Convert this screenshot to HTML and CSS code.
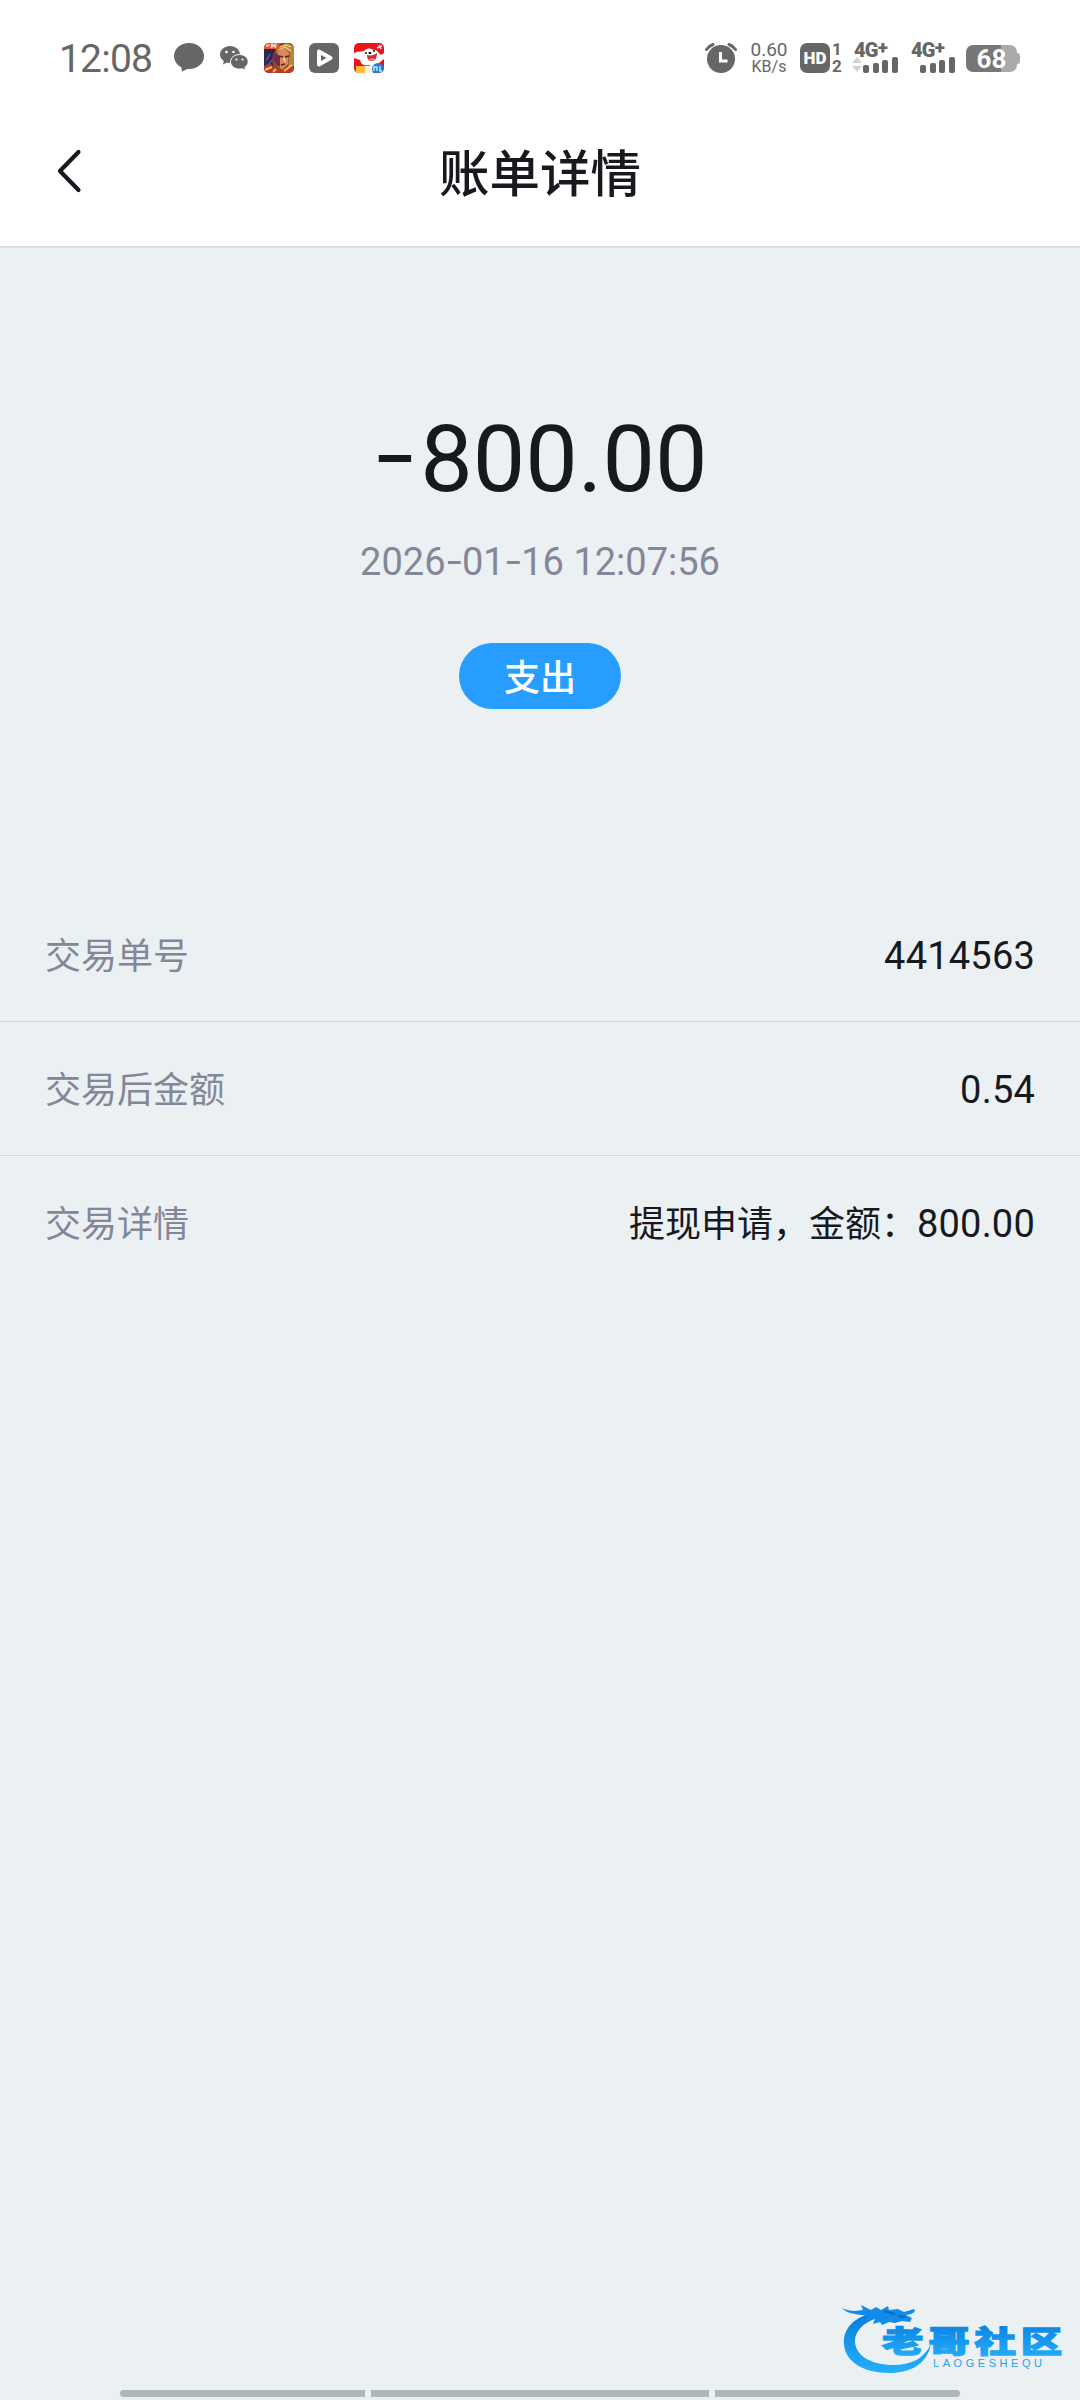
FILE: index.html
```html
<!DOCTYPE html>
<html lang="zh-CN">
<head>
    <meta charset="UTF-8">
    <meta name="viewport" content="width=device-width, initial-scale=1.0">
    <title>账单详情</title>
    <link rel="stylesheet" href="styles.css">
</head>
<body>
    <div class="page">
        <header class="header">
            <div class="status-bar">
                <span class="time">12:08</span>
                <div class="status-left">
                    <svg width="30" height="30" viewBox="0 0 30 30"><path d="M15 0C6.500 0 0 5.800 0 13c0 4.600 2.800 8.900 7.300 11.300L8 28.500l5.300-2.600C22.500 26.800 30 21 30 13 30 5.800 23.500 0 15 0z" fill="#666"/></svg>
                    <svg width="30" height="30" viewBox="0 0 30 30">
                        <path d="M11 3C5.500 3 1 6.800 1 11.500c0 2.700 1.500 5 3.800 6.600L4 21.500l3.800-2c1 .3 2.100.5 3.200.5 5.500 0 10-3.800 10-8.500S16.500 3 11 3z" fill="#666"/>
                        <path d="M20.500 11.500c-5 0-9 3.200-9 7.300s4 7.300 9 7.300c1 0 2-.1 2.900-.4l3.300 1.600-.8-2.900c2-1.400 3.300-3.400 3.300-5.600 0-4.100-3.900-7.300-8.700-7.300z" fill="#666" stroke="#fff"/>
                        <g fill="#fff"><circle cx="7.500" cy="9" r="1.300"/><circle cx="14.500" cy="9" r="1.300"/><circle cx="17.500" cy="16.500" r="1.100"/><circle cx="23.500" cy="16.500" r="1.100"/></g>
                    </svg>
                    <!-- game -->
                    <svg width="30" height="30" viewBox="0 0 30 30">
                        <defs><clipPath id="clip1"><rect width="30" height="30" rx="5"/></clipPath></defs>
                        <g clip-path="url(#clip1)">
                            <rect width="30" height="30" fill="#94452c"/>
                            <path d="M0 5h12L8 16l2 14H0z" fill="#33264c"/>
                            <path d="M14 4l9-4 7 3v20l-6 2 2-15-7-5-8 6z" fill="#b98440"/>
                            <path d="M12 10l8-5 5 5-1 11-6 6-5-5-3-6z" fill="#d98a5c"/>
                            <path d="M12 9l4 5v10l-3-2-4-6z" fill="#6b2c4c"/>
                            <path d="M15 13l4 1M21 14l4-1M17 22l4-1" stroke="#5c241c" stroke-width="1.500"/>
                            <path d="M16 4l6-2 5 2M15 7l6-3 6 4" stroke="#f0ce83" stroke-width="1.200" fill="none"/>
                            <path d="M20 15l1 4" stroke="#ffd39c" stroke-width="1.500"/>
                            <path d="M0 23l6-3 6 7 6 1 12-5v7H0z" fill="#b83a27"/>
                            <path d="M1 27l7-3M20 28l8-6M9 29l3-3" stroke="#f5b95d" stroke-width="2"/>
                            <path d="M2 18l4-7M4 22l4-5" stroke="#565ba4" stroke-width="1.500"/>
                            <path d="M0 0h16l-2 6H0z" fill="#e25931"/>
                            <path d="M3 4V2h3M7 5l1-4 2 2-2 1M13 1h-2l-1 2h2l-1 2" stroke="#ffe6cf" stroke-width="1.200" fill="none"/>
                        </g>
                    </svg>
                    <svg width="30" height="30" viewBox="0 0 30 30"><rect width="30" height="30" rx="6" fill="#666"/><path d="M10 8.500v13l11.500-6.500z" fill="#666" stroke="#fff" stroke-width="4" stroke-linejoin="round"/></svg>
                    <!-- travel -->
                    <svg width="30" height="30" viewBox="0 0 30 30">
                        <defs><clipPath id="clip2"><rect width="30" height="30" rx="5"/></clipPath></defs>
                        <g clip-path="url(#clip2)">
                            <rect width="30" height="30" fill="#e8151f"/>
                            <path d="M0 10c4-2 7-1 10-2 3-3 6-3 9-1 4-1 5 3 8 5l3-2v6l-4 3c-2 4-7 5-12 3-5 1-7-1-8-5L0 15z" fill="#fff"/>
                            <path d="M13 12c4 1 7 0 10-2 0 5-2 8-5 8s-5-2-5-6z" fill="#d82935"/>
                            <path d="M15 16c2-1 4-1 6 0l-3 2z" fill="#ff8f99"/>
                            <circle cx="12" cy="10" r=".9"/><circle cx="20" cy="8" r=".9"/><ellipse cx="16" cy="10" rx="1.600" ry="1"/>
                            <path d="M23 5l5-2M25 2l2 4" stroke="#fff" stroke-width="1.500"/>
                            <path d="M2 23h9v7H2z" fill="#ffbd35"/>
                            <path d="M11 23h8v7h-8z" fill="#fff1e4"/>
                            <circle cx="24" cy="26" r="6" fill="#227bd6"/>
                            <path d="M20 28v-4h3v4M26 23v5h2" stroke="#d9f1ff" stroke-width="1.300" fill="none"/>
                        </g>
                    </svg>
                </div>
                <div class="status-right">
                    <svg width="32" height="30" viewBox="0 0 32 30"><circle cx="16" cy="16" r="14" fill="#666"/><path d="M1.500 6.500Q4 3 8 1.500M30.500 6.500Q28 3 24 1.500" stroke="#666" stroke-width="3" fill="none" stroke-linecap="round"/><path d="M15.500 9v9h7" stroke="#fff" stroke-width="3" fill="none"/></svg>
                    <div class="speed"><span>0.60</span><span class="unit">KB/s</span></div>
                    <div class="hd"><span class="hd-box">HD</span><span class="sim"><b>1</b><b>2</b></span></div>
                    <div class="signal">
                        <span class="net">4G<sup>+</sup></span>
                        <svg width="47" height="17" viewBox="0 0 47 17"><path d="M0 7l5-6 5 6zM0 10h10l-5 6z" fill="#d2d2d2"/><g fill="#666"><rect x="11" y="9" width="6" height="8" rx="2"/><rect x="21" y="7" width="6" height="10" rx="2"/><rect x="30" y="4" width="6" height="13" rx="2"/><rect x="40" y="1" width="6" height="16" rx="2"/></g></svg>
                    </div>
                    <div class="signal signal-2">
                        <span class="net">4G<sup>+</sup></span>
                        <svg width="47" height="17" viewBox="0 0 47 17"><g fill="#666"><rect x="11" y="9" width="6" height="8" rx="2"/><rect x="21" y="7" width="6" height="10" rx="2"/><rect x="30" y="4" width="6" height="13" rx="2"/><rect x="40" y="1" width="6" height="16" rx="2"/></g></svg>
                    </div>
                    <div class="battery"><span class="level">68</span></div>
                </div>
            </div>
            <div class="nav">
                <svg class="back" width="26" height="44" viewBox="0 0 26 44"><path d="M22.500 3L4 22l18.500 19" fill="none" stroke="#17191f" stroke-width="4.200" stroke-linecap="round" stroke-linejoin="round"/></svg>
                <h1>账单详情</h1>
            </div>
        </header>

        <main>
            <section class="summary">
                <div class="amount"><span class="minus">-</span>800.00</div>
                <div class="date">2026<span class="dash">-</span>01<span class="dash">-</span>16 12:07:56</div>
                <div class="tag">支出</div>
            </section>
            <ul class="details">
                <li><span class="label">交易单号</span><span class="value"><span class="num">4414563</span></span></li>
                <li><span class="label">交易后金额</span><span class="value"><span class="num">0.54</span></span></li>
                <li><span class="label">交易详情</span><span class="value">提现申请，金额：<span class="num">800.00</span></span></li>
            </ul>
        </main>

        <svg class="watermark" width="230" height="76" viewBox="0 0 230 76">
            <defs>
                <linearGradient id="blue" x1="0" y1="0" x2="0" y2="1"><stop offset="0" stop-color="#087bdd"/><stop offset="1" stop-color="#24b0fb"/></linearGradient>
            </defs>
            <path d="M31 11C12 16 2 27 3 42c1 18 20 29 45 29 22 0 38-9 42-29-7 15-20 21-38 21C31 63 14 54 14 39c0-10 8-18 22-23z" fill="url(#blue)"/>
            <path d="M1 6c9 4 15 3 21 2l-2-5 10 5 5-3 5 3 7-4 1 4 9-1 6 3 10-3c2 2 0 4-3 5l-5 1 6 3-2 4-8-1-7 2-6-1-7 3-2-3-7 2 2-6-9 3 1-5C16 12 6 12 1 6z" fill="#138bea"/>
            <path d="M43 9l11 3M57 14l8 1" stroke="#076bc4" stroke-width="2"/>
            <g transform="translate(41 50) scale(1.12 .8)"><text class="brand" x="0" y="0">老哥社区</text></g>
            <text class="brand-en" x="92" y="65" textLength="109">LAOGESHEQU</text>
        </svg>

        <div class="gesture-bar"><i class="side"></i><i class="mid"></i><i class="side"></i></div>
    </div>
</body>
</html>
```

FILE: styles.css
```css
* {
    box-sizing: border-box;
}
body {
    margin: 0;
    font-family: Roboto, "Noto Sans CJK SC", sans-serif;
    color: #17191f;
    background-color: #ebf0f3;
}
.page {
    position: relative;
    display: flex;
    flex-direction: column;
    width: 1080px;
    height: 2400px;
    overflow: hidden;
}
svg {
    display: block;
    flex: none;
}
.header {
    height: 248px;
    background-color: #fff;
    border-bottom: 2px solid #dbdfe0;
}

/* status bar */
.status-bar {
    display: flex;
    align-items: center;
    height: 116px;
    padding-left: 59px;
    padding-right: 60px;
    color: #666;
}
.time {
    width: 115px;
    padding-top: 2px;
    font-size: 39px;
    letter-spacing: -0.8px;
}
.status-left {
    display: flex;
    gap: 15px;
}
.status-right {
    display: flex;
    align-items: center;
    height: 30px;
    margin-left: auto;
}
.speed {
    display: flex;
    flex-direction: column;
    width: 40px;
    margin-left: 12px;
    font-size: 19px;
    line-height: 15px;
    text-align: center;
}
.speed .unit {
    padding-top: 3px;
    font-size: 16px;
    line-height: 14px;
}
.hd {
    display: flex;
    gap: 2px;
    width: 43px;
    margin-left: 11px;
}
.hd-box {
    width: 30px;
    height: 30px;
    border-radius: 7px;
    background-color: #666;
    color: #fff;
    font-size: 17px;
    font-weight: 900;
    line-height: 31px;
    text-align: center;
}
.sim {
    display: flex;
    flex-direction: column;
    font-size: 17px;
    line-height: 13px;
    gap: 4px;
}
.signal {
    width: 47px;
    height: 30px;
    margin-left: 9px;
}
.signal-2 {
    margin-left: 10px;
}
.net {
    display: block;
    height: 13px;
    padding-left: 2px;
    font-size: 20px;
    font-weight: 900;
    line-height: 14px;
    letter-spacing: -0.8px;
}
.net sup {
    font-size: 19px;
    line-height: 0;
    vertical-align: 3px;
}
.battery {
    display: flex;
    align-items: center;
    width: 54px;
    margin-left: 10px;
}
.level {
    width: 51px;
    height: 27px;
    border-radius: 7px;
    background: linear-gradient(to right, #777 68%, #aaa 68%);
    color: #fff;
    font-size: 26px;
    font-weight: bold;
    line-height: 28px;
    text-align: center;
}
.battery::after {
    content: '';
    width: 3px;
    height: 11px;
    border-radius: 0 4px 4px 0;
    background-color: #aaa;
}

/* title */
.nav {
    display: flex;
    align-items: center;
    height: 110px;
    padding: 0 56px;
}
h1 {
    flex: 1;
    margin: 0 26px 0 0;
    padding-top: 7px;
    font-size: 50.5px;
    font-weight: 500;
    line-height: 110px;
    text-align: center;
}

/* amount */
.summary {
    display: flex;
    flex-direction: column;
    align-items: center;
    height: 640px;
    padding-top: 156px;
}
.amount {
    font-size: 93.5px;
    line-height: 110px;
}
.minus {
    display: inline-block;
    margin-left: 10px;
    margin-right: 12px;
    transform: translateY(-4px) scaleX(1.45);
}
.date {
    margin-top: 20px;
    font-size: 38px;
    line-height: 56px;
    color: #838797;
}
.dash {
    display: inline-block;
    margin: 0 3px;
    transform: translateY(-1px) scaleX(1.4);
}
.tag {
    width: 162px;
    height: 66px;
    margin-top: 53px;
    padding-top: 2px;
    border-radius: 33px;
    background-color: #279eff;
    color: #fff;
    font-size: 36px;
    font-weight: 500;
    line-height: 68px;
    text-align: center;
}

/* detail rows */
.details {
    margin: 0;
    padding: 0;
    list-style: none;
}
.details li {
    display: flex;
    align-items: baseline;
    justify-content: space-between;
    height: 134px;
    padding: 0 45px;
    border-bottom: 1px solid #d1d6da;
    font-size: 36px;
    line-height: 137px;
}
.details li:last-child {
    border-bottom: none;
}
.label {
    color: #838797;
}
.num {
    font-size: 38px;
    letter-spacing: 0.2px;
}

.watermark {
    position: absolute;
    left: 841px;
    top: 2302px;
}
.brand {
    font-family: "Noto Sans CJK SC", sans-serif;
    font-size: 37px;
    font-weight: 900;
    letter-spacing: 4.3px;
    fill: url(#blue);
    stroke: url(#blue);
    stroke-width: 1.6px;
}
.brand-en {
    font-family: "Liberation Sans", sans-serif;
    font-size: 11px;
    fill: #2ba0ed;
}
.gesture-bar {
    display: flex;
    gap: 6px;
    margin-top: auto;
    padding: 0 120px 3px;
}
.gesture-bar i {
    height: 7px;
    background-color: #b0b7ba;
}
.gesture-bar .side {
    width: 245px;
}
.gesture-bar .mid {
    flex: 1;
}
.side:first-child {
    border-radius: 4px 0 0 4px;
}
.side:last-child {
    border-radius: 0 4px 4px 0;
}
```
